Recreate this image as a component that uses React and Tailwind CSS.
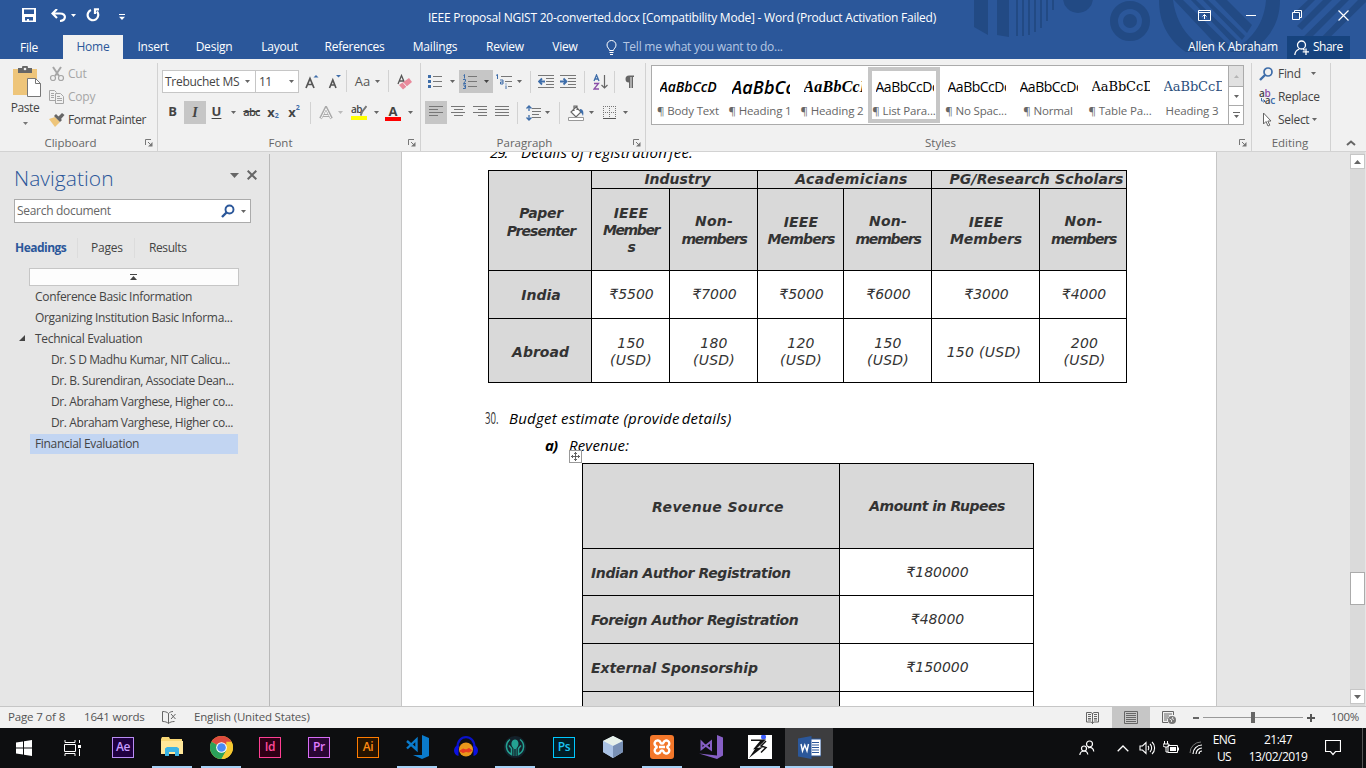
import React from "react";

/* ---------- small shared pieces ---------- */

function Svg({ w = 16, h = 16, vb, className = "", children }) {
  return (
    <svg width={w} height={h} viewBox={vb || `0 0 ${w} ${h}`} fill="none" className={`shrink-0 ${className}`}>
      {children}
    </svg>
  );
}

function Caret({ className = "text-[#666]" }) {
  return (
    <Svg w={5} h={3} className={className}>
      <path d="M0 0h5L2.500 3z" fill="currentColor" />
    </Svg>
  );
}

function Sep({ className = "" }) {
  return <div className={`w-px shrink-0 bg-[#d2d2d2] ${className}`} />;
}

function Cell({ className = "", children }) {
  return <div className={`flex h-full shrink-0 items-center justify-center ${className}`}>{children}</div>;
}

function Launcher() {
  return (
    <Svg w={8} h={8}>
      <path d="M.5 6V.5H6M3 3l3 3" stroke="#777" />
      <path d="M7.500 3v4.500H3z" fill="#777" />
    </Svg>
  );
}

function Lines({ rows, color = "#777" }) {
  return (
    <Svg w={15} h={13}>
      {rows.map(([x, w], i) => (
        <rect key={i} x={x} y={i * 3} width={w} height="1" fill={color} />
      ))}
    </Svg>
  );
}

function Group({ label, className = "", launcher = true, labelClass = "", children }) {
  return (
    <div className={`flex h-[88px] shrink-0 flex-col border-r border-[#d2d2d2] ${className}`}>
      <div className="h-[72px]">{children}</div>
      <div className="flex h-4 items-center">
        <span className={`flex-1 text-center text-[11.500px] text-[#666] ${labelClass}`}>{label}</span>
        <div className="w-[12px]">{launcher && <Launcher />}</div>
      </div>
    </div>
  );
}

/* ---------- title bar and tabs ---------- */

function HeaderArt() {
  return (
    <svg className="absolute right-0 top-0" width="406" height="59" viewBox="0 0 406 59" fill="#224a84">
      <circle cx="118" cy="-2" r="15" />
      <path d="M14 0h14v35l-14-8zM37 0h12v37l-12-2zM56 0h2v36h-2zM62 0h2v36h-2zM68 0h2v35h-2zM74 0h2v32h-2zM80 0h2v28h-2zM86 0h2v21h-2zM92 0h2v10h-2z" />
      <circle cx="170" cy="21" r="16" fill="none" stroke="#224a84" strokeWidth="8" />
      <circle cx="170" cy="21" r="7" />
      <path d="M199 0h14c2 16 9 30 20 40 6 5 12 9 20 12h-27C208 40 199 22 199 0zM320 0h-14c-1 14-6 26-14 35-7 8-14 13-23 17h20c20-12 31-29 31-52z" />
      <path d="M214 0h9l49 48-9 4zM231 0h5l43 42-4 4zM243 0h5l37 36-3 4zM255 0h12l25 25-5 8z" />
      <path d="M348 0h7l-17 17-4-4zM363 0h9l-30 30-5-4zM381 0h8l-47 47-4-5zM398 0h8v2l-51 50-4-4z" />
    </svg>
  );
}

const TABS = [
  ["Insert", "w-[60px]"],
  ["Design", "w-[62px]"],
  ["Layout", "w-[69px]"],
  ["References", "w-[81px]"],
  ["Mailings", "w-[80px]"],
  ["Review", "w-[60px]"],
  ["View", "w-[60px]"],
];

function Header() {
  return (
    <header className="relative h-[59px] bg-[#2b579a] text-white">
      <HeaderArt />
      <div className="relative flex h-[35px] pl-[22px]">
        <div className="flex h-[30px] w-[300px] items-center">
          <Svg w={14} h={14}>
            <path d="M0 0h14v14H0zM2 1.500v4.500h10V1.500zM3 9v3.500h2V11h2v1.500h4V9z" fill="#fff" fillRule="evenodd" />
          </Svg>
          <Svg w={15} h={13} className="ml-[15px]">
            <path d="M6 0L1.500 4.500 6 9M2 4.500h7c7 0 6 7 0 7.500" stroke="#fff" strokeWidth="2.200" />
          </Svg>
          <Caret className="ml-[5px] text-white" />
          <Svg w={14} h={14} className="ml-[10px]">
            <path d="M5 2a5.300 5.300 0 1 0 6 1.500M13 1.300H9V6" stroke="#fff" strokeWidth="2.200" />
          </Svg>
          <Svg w={6} h={6} className="ml-[19px] mt-1">
            <path d="M0 0h6v1H0zM0 2.800h6L3 6z" fill="#fff" />
          </Svg>
        </div>
        <div className="h-[35px] w-[720px] text-center text-[12px] leading-[35px] tracking-[-0.230px]">
          IEEE Proposal NGIST 20-converted.docx [Compatibility Mode] - Word (Product Activation Failed)
        </div>
        <div className="flex h-[30px] items-center pl-[156px]">
          <Svg w={13} h={11}>
            <path d="M.5.500h12v10H.5zM.5 2.500h12M6.500 9V4.500M4.500 6.500l2-2 2 2" stroke="#fff" />
          </Svg>
          <Svg w={10} h={2} className="ml-[35px]"><path d="M0 1.500h10" stroke="#fff" /></Svg>
          <Svg w={10} h={10} className="ml-[36px]">
            <path d="M.5 2.500h7v7h-7zM2.500 2.500v-2h7v7h-2" stroke="#fff" />
          </Svg>
          <Svg w={11} h={11} className="ml-[36px]"><path d="M.5.500l10 10M10.500.500l-10 10" stroke="#fff" strokeWidth="1.200" /></Svg>
        </div>
      </div>
      <nav className="relative flex h-6 items-center text-[12px] tracking-[-0.220px]">
        <span className="w-[63px] pr-[5px] pt-[2px] text-center">File</span>
        <span className="flex h-6 w-[60px] items-center justify-center bg-[#f1f1f1] text-[#2b579a]">Home</span>
        {TABS.map(([t, w]) => (
          <span key={t} className={`shrink-0 text-center ${w}`}>{t}</span>
        ))}
        <Svg w={11} h={15} className="ml-[11px]">
          <path d="M3.500 10.500c0-2-2.500-2.500-2.500-5.500a4.500 4.500 0 0 1 9 0c0 3-2.500 3.500-2.500 5.500zM3.500 12.500h4M4 14.500h3" stroke="#fff" />
        </Svg>
        <span className="ml-[6px] w-[180px] tracking-[-0.250px] text-[#b5c7e3]">Tell me what you want to do...</span>
        <span className="ml-[385px] w-[99px] tracking-[-0.200px]">Allen K Abraham</span>
        <div className="flex h-[23px] w-[63px] items-center bg-[#16437e] pl-[7px]">
          <Svg w={15} h={15}>
            <circle cx="7.500" cy="5" r="4" stroke="#fff" strokeWidth="1.300" />
            <path d="M.8 15c.2-3 2-5 4.500-6M9 8.500l1.500 2M12 8.500v6.500M8.700 11.800h6.300" stroke="#fff" strokeWidth="1.300" />
          </Svg>
          <span className="ml-1 tracking-[-0.500px]">Share</span>
        </div>
      </nav>
    </header>
  );
}

/* ---------- ribbon ---------- */

function Clipboard() {
  return (
    <Group label="Clipboard" className="w-[158px]" labelClass="pr-1">
      <div className="flex">
        <div className="flex w-[50px] flex-col items-center pt-[3px] text-[12px] tracking-[-0.400px]">
          <Svg w={30} h={32} className="ml-[4px]">
            <path d="M1 3h24v26H1z" fill="#eec57a" />
            <path d="M6 2h4a3 3 0 0 1 6 0h4v5H6z" fill="#666" />
            <circle cx="13" cy="3" r="1.300" fill="#f1f1f1" />
            <path d="M15.500 12.500h8l5 5v13h-13z" fill="#fff" stroke="#777" />
            <path d="M23.500 12.500v5h5" stroke="#777" />
          </Svg>
          <span className="leading-5">Paste</span>
          <Caret className="mt-[4px] text-[#777]" />
        </div>
        <div className="-ml-[2px] -mt-px flex flex-col text-[12px] tracking-[-0.220px]">
          <div className="flex h-[23px] items-center text-[#a6a6a6]">
            <Svg w={16} h={16} className="ml-[1px]">
              <path d="M4 1l6 9M12 1L6 10" stroke="#a6a6a6" strokeWidth="2" />
              <circle cx="4" cy="12" r="2.500" stroke="#a6a6a6" strokeWidth="1.200" />
              <circle cx="12" cy="12" r="2.500" stroke="#a6a6a6" strokeWidth="1.200" />
            </Svg>
            <span className="ml-[3px]">Cut</span>
          </div>
          <div className="flex h-[23px] items-center text-[#a6a6a6]">
            <Svg w={16} h={14} className="ml-[1px]">
              <path d="M6 10.500H.500V.500h5l2 2M2 3.500h3M2 5.500h3M2 7.500h3M6.500 3.500h5l3 3v7h-8zM8 6.500h3M8 8.500h5M8 10.500h5" stroke="#a6a6a6" />
            </Svg>
            <span className="ml-[3px]">Copy</span>
          </div>
          <div className="flex h-[23px] items-center text-[#444]">
            <Svg w={16} h={14} className="ml-[1px]">
              <path d="M0 6l6-2 5 5-5 5z" fill="#eec57a" />
              <path d="M5 3l2-2 6 6-2 2zM9 4l4-4 2.500 2-3.500 4z" fill="#666" />
            </Svg>
            <span className="ml-[3px] tracking-[-0.400px]">Format Painter</span>
          </div>
        </div>
      </div>
    </Group>
  );
}

function FontGroup() {
  return (
    <Group label="Font" className="w-[263px]" labelClass="pr-[5px]">
      <div className="mt-[7px] flex h-[23px] items-stretch pl-[4px] text-[12px]">
        <div className="flex w-[94px] items-center justify-between border border-[#c6c6c6] bg-white pl-[2px] pr-[5px] tracking-[-0.280px]">
          Trebuchet MS <Caret />
        </div>
        <div className="-ml-px flex w-[44px] items-center justify-between border border-[#c6c6c6] bg-white pl-[3px] pr-[4px] tracking-[-0.700px]">
          11 <Caret />
        </div>
        <Cell className="w-[25px]">
          <Svg w={14} h={15}>
            <path d="M1 14L5 4.500 9 14M2.500 10.500h5" stroke="#555" strokeWidth="1.700" />
            <path d="M8.500 3.500h5L11 1z" fill="#3e6da9" />
          </Svg>
        </Cell>
        <Cell className="w-[22px]">
          <Svg w={14} h={15}>
            <path d="M1.500 14L4.800 6 8 14M2.500 11h4.500" stroke="#555" strokeWidth="1.600" />
            <path d="M8 1h5l-2.500 2.500z" fill="#3e6da9" />
          </Svg>
        </Cell>
        <Sep className="h-[22px]" />
        <Cell className="w-[41px] gap-[5px] text-[13px] text-[#555]">Aa<Caret /></Cell>
        <Sep className="h-[22px]" />
        <Cell className="w-[30px]">
          <Svg w={15} h={16}>
            <path d="M1 10L4.500 1.500 8 10M2.500 7h4" stroke="#555" strokeWidth="1.300" />
            <path d="M8.500 6.500l3.500-2.500 3 4-9 7.500-4-4.500z" fill="#e8899b" />
            <path d="M6 8.500l4 4.500" stroke="#f1f1f1" />
          </Svg>
        </Cell>
      </div>
      <div className="mt-[8px] flex h-[23px] items-stretch pl-[3px] text-[13px] text-[#444]">
        <Cell className="w-[23px] pb-px font-bold">B</Cell>
        <Cell className="w-[22px] bg-[#c6c6c6] pb-px font-['Liberation_Serif',serif] text-[14px] font-bold italic">I</Cell>
        <Cell className="w-[21px] pb-px font-bold underline underline-offset-2">U</Cell>
        <Cell className="w-[12px]"><Caret /></Cell>
        <Cell className="w-[25px] text-[11px] font-semibold tracking-[-0.700px] line-through">abc</Cell>
        <Cell className="w-[18px] font-bold">x<span className="mt-2 text-[7px] text-[#3e6da9]">2</span></Cell>
        <Cell className="w-[24px] font-bold">x<span className="-mt-2 text-[7px] text-[#3e6da9]">2</span></Cell>
        <Cell className="w-[8px]"><Sep className="h-[22px]" /></Cell>
        <Cell className="w-[23px]">
          <Svg w={14} h={14}>
            <path d="M1.500 12.500L7 1.500l5.500 11M4 9.500h6" stroke="#aaa" strokeWidth="2.800" />
            <path d="M2 12.500L7 2.500l5 10M4.500 9.500h5" stroke="#f1f1f1" strokeWidth="1" />
          </Svg>
        </Cell>
        <Cell className="w-[7px]"><Caret className="text-[#bbb]" /></Cell>
        <Cell className="w-[30px] flex-col">
          <div className="flex h-[11px] items-start text-[10px] font-semibold leading-[8px] tracking-[-0.500px]">
            ab
            <Svg w={7} h={11} className="-ml-[2px]"><path d="M6.500 1L2 7l-1.500 3.500" stroke="#777" strokeWidth="2" /></Svg>
          </div>
          <div className="h-1 w-4 bg-[#ffff00]" />
        </Cell>
        <Cell className="w-[4px]"><Caret /></Cell>
        <Cell className="w-[30px] flex-col">
          <span className="h-[12px] text-[13px] font-bold leading-[12px]">A</span>
          <div className="h-1 w-4 bg-[#ff0000]" />
        </Cell>
        <Cell className="w-[4px]"><Caret /></Cell>
      </div>
    </Group>
  );
}

function ListIcon({ numbered }) {
  return (
    <Svg w={14} h={15}>
      <path d="M5 2.500h9M5 7.500h9M5 12.500h9" stroke="#777" />
      {numbered ? (
        <path d="M.5 1.500l1-1v4M0 5.500h2.500v1.500L.5 9.500H3M0 11h2.500v3.500H0M1 12.700h1.500" stroke="#3e6da9" />
      ) : (
        <path d="M0 1h3v3H0zM0 6h3v3H0zM0 11h3v3H0z" fill="#3e6da9" />
      )}
    </Svg>
  );
}

function IndentIcon({ out }) {
  return (
    <Svg w={16} h={13}>
      <path d="M0 .500h16M8 3.500h8M8 6.500h8M8 9.500h8M0 12.500h16" stroke="#777" />
      <path d={out ? "M7 6.500H1.500M4 3.500l-3 3 3 3" : "M0 6.500h5.500M3.500 3.500l3 3-3 3"} stroke="#3e6da9" strokeWidth="1.800" />
    </Svg>
  );
}

function ParagraphGroup() {
  return (
    <Group label="Paragraph" className="w-[225px]" labelClass="pr-[5px]">
      <div className="mt-[7px] flex h-[23px] items-stretch">
        <Cell className="w-[28px]"><ListIcon /></Cell>
        <Cell className="w-[10px] pr-1"><Caret /></Cell>
        <Cell className="w-[34px] gap-[7px] bg-[#c6c6c6]"><ListIcon numbered /><Caret className="text-[#444]" /></Cell>
        <Cell className="w-[22px] pl-px">
          <Svg w={17} h={16}>
            <path d="M5 2.500h11M9 7.500h7M12 12.500h4" stroke="#777" />
            <path d="M0 1.500l1.500-1V5M4 6h3v4H4.500V8H7M10 9.500v1M10 11.500V15" stroke="#3e6da9" />
          </Svg>
        </Cell>
        <Cell className="w-[9px] pr-px"><Caret /></Cell>
        <Cell className="w-[13px]"><Sep className="h-[22px]" /></Cell>
        <Cell className="w-[18px]"><IndentIcon out /></Cell>
        <Cell className="w-[26px]"><IndentIcon /></Cell>
        <Cell className="w-[6px]"><Sep className="h-[22px]" /></Cell>
        <Cell className="w-[26px]">
          <Svg w={15} h={16}>
            <path d="M1 7L3.500 1 6 7M2 5h3" stroke="#3e6da9" strokeWidth="1.300" />
            <path d="M1 9.500h4.500L1 15h5" stroke="#8a4fa8" strokeWidth="1.300" />
            <path d="M11.500 1v13M8.500 11l3 3 3-3" stroke="#666" strokeWidth="1.200" />
          </Svg>
        </Cell>
        <Cell className="w-[3px]"><Sep className="h-[22px]" /></Cell>
        <Cell className="w-[27px]">
          <Svg w={11} h={13}>
            <path d="M5 7.500a3.500 3.500 0 0 1 0-7h5v1.500H9V13H7.500V2H6.500v11H5z" fill="#666" />
          </Svg>
        </Cell>
      </div>
      <div className="mt-[8px] flex h-[23px] items-stretch pl-[4px]">
        <Cell className="w-[22px] bg-[#c6c6c6]"><Lines rows={[[0, 14], [0, 9], [0, 14], [0, 9]]} /></Cell>
        <Cell className="w-[22px]"><Lines rows={[[0, 14], [3, 9], [0, 14], [3, 9]]} /></Cell>
        <Cell className="w-[22px]"><Lines rows={[[0, 14], [5, 9], [0, 14], [5, 9]]} /></Cell>
        <Cell className="w-[22px]"><Lines rows={[[0, 14], [0, 14], [0, 14], [0, 14]]} /></Cell>
        <Cell className="w-[8px]"><Sep className="h-[22px]" /></Cell>
        <Cell className="w-[24px]">
          <Svg w={15} h={16}>
            <path d="M6 3.500h9M6 6.500h9M6 9.500h7M6 12.500h9" stroke="#777" />
            <path d="M3 1v5M.5 3.500L3 1l2.500 2.500M3 10v5M.5 12.500L3 15l2.500-2.500" stroke="#3e6da9" strokeWidth="1.300" />
          </Svg>
        </Cell>
        <Cell className="w-[5px]"><Caret /></Cell>
        <Cell className="w-[18px]"><Sep className="h-[22px]" /></Cell>
        <Cell className="w-[16px]">
          <Svg w={17} h={16}>
            <path d="M8 2l5 5-5 5-5-5zM6 6V1h3v4" stroke="#666" strokeWidth="1.200" fill="#fff" />
            <path d="M12 4c3 0 4 3 3 7-1-2-1-3-3-4z" fill="#3e6da9" />
            <path d="M.5 12.500h15v3H.5z" fill="#fff" stroke="#999" />
          </Svg>
        </Cell>
        <Cell className="w-[14px]"><Caret /></Cell>
        <Cell className="w-[22px]">
          <Svg w={13} h={13}>
            <path d="M.5 0v12M6.500 0v12M12.500 0v12M0 .500h13M0 6.500h13" stroke="#777" strokeDasharray="1 1" />
            <path d="M0 12.500h13" stroke="#555" />
          </Svg>
        </Cell>
        <Cell className="w-[10px]"><Caret /></Cell>
      </div>
    </Group>
  );
}

const STYLES = [
  ["AaBbCcD", "¶ Body Text", "text-[14px] font-semibold italic text-black tracking-[-0.050px]"],
  ["AaBbCc", "¶ Heading 1", "text-[18px] font-semibold italic text-black tracking-[0.100px]"],
  ["AaBbCcL", "¶ Heading 2", "font-['Liberation_Serif',serif] text-[16px] font-bold italic text-black tracking-[0.200px]"],
  ["AaBbCcDc", "¶ List Para...", "text-[14px] text-black tracking-[-0.500px]"],
  ["AaBbCcDc", "¶ No Spac...", "text-[14px] text-black tracking-[-0.500px]"],
  ["AaBbCcDc", "¶ Normal", "text-[14px] text-black tracking-[-0.500px]"],
  ["AaBbCcD", "¶ Table Pa...", "font-['DejaVu_Serif',serif] text-[13px] text-black tracking-[-0.100px]"],
  ["AaBbCcD", "Heading 3", "font-['DejaVu_Serif',serif] text-[13px] text-[#2b4f7d] tracking-[-0.100px]"],
];

function StylesGroup() {
  return (
    <Group label="Styles" className="w-[606px]" labelClass="pr-[4px]">
      <div className="ml-[5px] mt-[2px] flex h-[60px] w-[593px] border border-[#ababab] bg-white">
        {STYLES.map(([sample, name, cls], i) => (
          <div
            key={i}
            className={`my-px flex h-[56px] w-[72px] shrink-0 flex-col items-center ${
              i === 3 ? "border-4 border-[#c6c6c6]" : "border-4 border-transparent"
            }`}
          >
            <div className={`ml-px mt-[5px] h-[22px] w-[58px] overflow-hidden whitespace-nowrap leading-[22px] ${cls}`}>{sample}</div>
            <div className="mt-[5px] whitespace-nowrap text-[11.500px] leading-4 tracking-[-0.150px] text-[#666]">{name}</div>
          </div>
        ))}
        <div className="flex w-[15px] flex-col border-l border-[#ababab]">
          <div className="flex h-5 items-center justify-center bg-[#e1e1e1]">
            <Caret className="rotate-180 text-[#b5b5b5]" />
          </div>
          <div className="flex h-5 items-center justify-center border-y border-[#ababab]"><Caret /></div>
          <div className="flex flex-1 items-center justify-center">
            <Svg w={7} h={6}><path d="M0 0h7v1H0zM1 3h5L3.500 6z" fill="#666" /></Svg>
          </div>
        </div>
      </div>
    </Group>
  );
}

function EditingGroup() {
  return (
    <Group label="Editing" className="w-[79px]" launcher={false} labelClass="pl-[10px]">
      <div className="-mt-px flex flex-col pl-[7px] text-[12px] tracking-[-0.300px] text-[#444]">
        <div className="flex h-[23px] items-center">
          <Svg w={16} h={14}>
            <circle cx="9" cy="5" r="4" stroke="#3e6da9" strokeWidth="1.700" />
            <path d="M6 8l-5 5" stroke="#3e6da9" strokeWidth="2.400" />
          </Svg>
          <span className="ml-[3px]">Find</span>
          <Caret className="ml-[10px] text-[#666]" />
        </div>
        <div className="flex h-[23px] items-center">
          <div className="flex w-4 flex-col text-[10px] font-semibold leading-[7px] tracking-[-0.300px]">
            <span>a<span className="text-[#8a4fa8]">b</span></span>
            <span className="flex items-center justify-end">
              <Svg w={4} h={5}><path d="M.5 0v3H4M2.500 1.500L4 3 2.500 4.500" stroke="#3e6da9" /></Svg>
              a<span className="text-[#3e6da9]">c</span>
            </span>
          </div>
          <span className="ml-[3px]">Replace</span>
        </div>
        <div className="flex h-[23px] items-center">
          <Svg w={16} h={15}>
            <path d="M4.500 1v11l2.500-2.500 2 4.500 1.800-.8-2-4.200h3.200z" fill="#fff" stroke="#666" />
          </Svg>
          <span className="ml-[3px]">Select</span>
          <Caret className="ml-[3px] text-[#666]" />
        </div>
      </div>
    </Group>
  );
}

function Ribbon() {
  return (
    <section className="flex h-[93px] border-b border-[#d2d2d2] bg-[#f1f1f1] pt-[4px] text-[#444]">
      <Clipboard />
      <FontGroup />
      <ParagraphGroup />
      <StylesGroup />
      <EditingGroup />
      <div className="flex flex-1 items-end justify-center pb-[5px] pl-[4px]">
        <Svg w={10} h={6}><path d="M1 5l4-3.500L9 5" stroke="#666" strokeWidth="2" /></Svg>
      </div>
    </section>
  );
}

/* ---------- navigation pane ---------- */

const HEADINGS = [
  ["Conference Basic Information", 1],
  ["Organizing Institution Basic Informa...", 1],
  ["Technical Evaluation", 1, true],
  ["Dr. S D Madhu Kumar, NIT Calicu...", 2],
  ["Dr. B. Surendiran, Associate Dean...", 2],
  ["Dr. Abraham Varghese, Higher co...", 2],
  ["Dr. Abraham Varghese, Higher co...", 2],
  ["Financial Evaluation", 1, false, true],
];

function Navigation() {
  return (
    <aside className="mt-[2px] w-[270px] shrink-0 border-r border-[#b9b9b9] text-[12px] tracking-[-0.200px] text-[#444]">
      <div className="flex h-[45px] pl-[14px] pt-[8px]">
        <h2 className="w-[216px] text-[21px] font-light leading-8 tracking-[0.050px] text-[#2b579a]">Navigation</h2>
        <Svg w={9} h={5} className="mt-[11px]"><path d="M0 0h9L4.500 5z" fill="#666" /></Svg>
        <Svg w={10} h={10} className="ml-[8px] mt-[8px]"><path d="M.7.700l8.600 8.600M9.300.700L.7 9.300" stroke="#666" strokeWidth="2" /></Svg>
      </div>
      <div className="ml-[14px] flex h-6 w-[237px] items-center border border-[#ababab] bg-white pl-[2px] text-[#666]">
        <span className="w-[204px] tracking-[-0.300px]">Search document</span>
        <Svg w={14} h={14}>
          <circle cx="8.500" cy="5.500" r="4" stroke="#2b579a" strokeWidth="1.900" />
          <path d="M5.500 8.500L1 13" stroke="#2b579a" strokeWidth="2.400" />
        </Svg>
        <Caret className="ml-[6px] text-[#666]" />
      </div>
      <div className="mt-[15px] flex h-5 items-center">
        <span className="w-[77px] pl-[15px] font-bold tracking-[-0.530px] text-[#2b579a]">Headings</span>
        <Sep className="h-5 bg-[#dcdcdc]" />
        <span className="w-[56px] pl-[13px]">Pages</span>
        <Sep className="h-5 bg-[#dcdcdc]" />
        <span className="pl-[14px] tracking-[-0.400px]">Results</span>
      </div>
      <div className="ml-[29px] mt-[10px] flex h-[18px] w-[210px] items-center justify-center border border-[#c6c6c6] bg-[#fdfdfd]">
        <Svg w={7} h={6} className="-ml-[2px]"><path d="M0 0h7v1H0zM3.500 2L7 6H0z" fill="#444" /></Svg>
      </div>
      <ul>
        {HEADINGS.map(([text, level, open, active], i) => (
          <li key={i} className="flex h-[21px] items-center">
            <span className="w-[30px] pl-[19px]">
              {open && <Svg w={6} h={6} className="-mt-[2px]"><path d="M6 0v6H0z" fill="#444" /></Svg>}
            </span>
            <span
              className={`h-5 w-[208px] whitespace-nowrap leading-5 ${
                level === 2 ? "pl-[21px] tracking-[-0.400px]" : "pl-[5px] tracking-[-0.320px]"
              } ${active ? "bg-[#c2d5f2]" : ""}`}
            >
              {text}
            </span>
          </li>
        ))}
      </ul>
    </aside>
  );
}

/* ---------- document ---------- */

const HEAD = "flex items-center justify-center bg-[#d9d9d9] text-center font-bold";
const BODY = "flex items-center justify-center bg-white text-center text-[14px]";

function FeeTable() {
  return (
    <div className="ml-[86px] mt-[9px] grid h-[213px] w-[639px] shrink-0 grid-cols-[102px_77px_87px_85px_87px_107px_86px] grid-rows-[17px_81px_47px_63px] gap-px bg-black p-px font-['DejaVu_Sans',sans-serif] text-[14px] italic leading-[17px] text-[#333]">
      <div className={`${HEAD} row-span-2 pl-[2px] pt-[2px] leading-[18px] tracking-[-0.950px]`}>
        <span><span className="tracking-[-0.300px]">Paper</span><br />Presenter</span>
      </div>
      <div className={`${HEAD} col-span-2 pl-[6px]`}>Industry</div>
      <div className={`${HEAD} col-span-2 pl-[14px] tracking-[0.400px]`}>Academicians</div>
      <div className={`${HEAD} col-span-2 whitespace-nowrap pl-[15px] tracking-[0.150px]`}>PG/Research Scholars</div>
      <div className={`${HEAD} pb-px pl-px pt-[2px] tracking-[-1.400px]`}>
        <span><span className="tracking-[0.200px]">IEEE</span><br />Member<br />s</span>
      </div>
      <NonMembers />
      <div className={`${HEAD} pl-px pt-[2px] tracking-[-0.800px]`}>
        <span><span className="tracking-[0.200px]">IEEE</span><br />Members</span>
      </div>
      <NonMembers />
      <div className={`${HEAD} pl-px pt-[2px] tracking-[-0.100px]`}>
        <span><span className="tracking-[0.200px]">IEEE</span><br />Members</span>
      </div>
      <NonMembers />
      <div className={`${HEAD} pl-[2px] pt-px`}>India</div>
      {["5500", "7000", "5000", "6000", "3000", "4000"].map((v) => (
        <div key={v} className={`${BODY} pl-[2px]`}>₹{v}</div>
      ))}
      <div className={`${HEAD} pl-px pt-[3px]`}>Abroad</div>
      {["150", "180", "120", "150"].map((v, i) => (
        <div key={i} className={`${BODY} pl-px pt-[3px] tracking-[0.200px]`}><span>{v}<br />(USD)</span></div>
      ))}
      <div className={`${BODY} pr-[3px] pt-[3px] tracking-[0.300px]`}>150 (USD)</div>
      <div className={`${BODY} pl-[3px] pt-[3px] tracking-[0.200px]`}><span>200<br />(USD)</span></div>
    </div>
  );
}

function NonMembers() {
  return (
    <div className={`${HEAD} pl-px leading-[18px] tracking-[-1.200px]`}>
      <span><span className="tracking-[0.200px]">Non-</span><br />members</span>
    </div>
  );
}

function RevenueTable() {
  return (
    <div className="relative ml-[180px] mt-[9px] grid w-[452px] shrink-0 grid-cols-[256px_193px] grid-rows-[84px_46px_47px_47px_30px] gap-px bg-black p-px font-['DejaVu_Sans',sans-serif] text-[14px] italic text-[#333]">
      <div className="absolute -left-[13px] -top-[13px] flex h-[13px] w-[13px] items-center justify-center border border-[#999] bg-white">
        <Svg w={9} h={9}>
          <path d="M4.500 0v9M0 4.500h9M3 2l1.500-1.500L6 2M3 7l1.500 1.500L6 7M2 3L.5 4.500 2 6M7 3l1.500 1.500L7 6" stroke="#555" strokeWidth="0.900" />
        </Svg>
      </div>
      <div className={`${HEAD} pl-[14px] pt-[2px] tracking-[0.350px]`}>Revenue Source</div>
      <div className={`${HEAD} pl-px tracking-[-0.500px]`}>Amount in Rupees</div>
      {[
        ["Indian Author Registration", "₹180000", "tracking-[-0.400px] pt-[2px]"],
        ["Foreign Author Registration", "₹48000", "tracking-[-0.470px] pt-px"],
        ["External Sponsorship", "₹150000", "tracking-[-0.080px]"],
      ].map(([name, amount, track]) => (
        <React.Fragment key={name}>
          <div className={`flex items-center bg-[#d9d9d9] pl-[8px] font-bold ${track}`}>{name}</div>
          <div className={`${BODY} pb-px pl-[2px]`}>{amount}</div>
        </React.Fragment>
      ))}
      <div className="bg-[#d9d9d9]" />
      <div className="bg-white" />
    </div>
  );
}

function Document() {
  return (
    <div className="ml-[131px] w-[816px] shrink-0 overflow-hidden border-x border-[#c6c6c6] bg-white text-[15px] leading-[18px] text-black">
      <div className="-mt-[9px] flex h-[18px] pl-[88px]">
        <span className="w-[31px] italic tracking-[-1px]">29.</span>
        <span className="whitespace-nowrap italic tracking-[0.150px]">Details of registration<span className="-ml-[2px]"> fee:</span></span>
      </div>
      <FeeTable />
      <div className="mt-[26px] flex h-[18px] pl-[83px]">
        <span className="w-[24px]"><span className="inline-block origin-left scale-x-[0.600] text-[16px] text-[#333]">30.</span></span>
        <span className="whitespace-nowrap italic tracking-[0.230px]">Budget estimate (provide<span className="-ml-[2px]">&nbsp;details)</span></span>
      </div>
      <div className="mt-[9px] flex h-[18px] pl-[143px] italic">
        <span className="w-[24px] font-bold tracking-[-1px]">a)</span>
        <span className="tracking-[0.150px]">Revenue:</span>
      </div>
      <RevenueTable />
    </div>
  );
}

function Scrollbar() {
  return (
    <div className="ml-auto mr-[1px] flex w-[15px] shrink-0 flex-col bg-[#dadada] pb-[2px] pt-[2px]">
      <div className="flex h-[15px] items-center justify-center border border-[#c6c6c6] bg-white">
        <Svg w={7} h={4}><path d="M0 4h7L3.500 0z" fill="#666" /></Svg>
      </div>
      <div className="mt-[403px] h-[33px] border border-[#ababab] bg-white" />
      <div className="mt-auto flex h-[15px] items-center justify-center border border-[#c6c6c6] bg-white">
        <Svg w={7} h={4}><path d="M0 0h7L3.500 4z" fill="#666" /></Svg>
      </div>
    </div>
  );
}

/* ---------- status bar ---------- */

function StatusBar() {
  return (
    <footer className="flex h-[22px] shrink-0 items-center border-t border-[#c6c6c6] bg-[#f1f1f1] text-[11.500px] tracking-[-0.170px] text-[#555]">
      <span className="w-[76px] pb-px pl-[8px]">Page 7 of 8</span>
      <span className="w-[86px] pb-px pl-[8px]">1641 words</span>
      <Svg w={15} h={13}>
        <path d="M6.500 2.500C5 1 3 .500.500.500v10c2.500 0 4.500.500 6 2zC8 1 9.500.500 11 .500M6.500 12.500C8 11 10 10.500 12.500 10.500M9 3l4.500 5M13.500 3L9 8" stroke="#666" />
      </Svg>
      <span className="ml-[17px] w-[892px] pb-px">English (United States)</span>
      <Svg w={13} h={13}>
        <path d="M6.500 2v11M.5 1.500h4.500l1.500 1 1.500-1h4.500v9.500H8L6.500 12 5 11H.500zM2 3.500h3M2 5.500h3M2 7.500h3M2 9h3M8 3.500h3M8 5.500h3M8 7.500h3M8 9h3" stroke="#666" />
      </Svg>
      <div className="ml-[13px] flex h-full w-[38px] items-center justify-center bg-[#c6c6c6]">
        <Svg w={14} h={13}><path d="M.5.500h13v12H.500zM2 2.500h10M2 4.500h10M2 6.500h10M2 8.500h10M2 10.500h10" stroke="#666" /></Svg>
      </div>
      <Svg w={14} h={13} className="ml-[12px]">
        <path d="M6 11.500H.500V.500h11V4M2 3h8M2 5h5M2 7h4M2 9h3" stroke="#666" />
        <circle cx="10" cy="9" r="4" fill="#777" />
        <path d="M7.500 8l2 1v2M11 6l-1 1.500 2 1" stroke="#f1f1f1" strokeWidth="0.900" />
      </Svg>
      <div className="ml-[17px] h-[2px] w-[6px] bg-[#666]" />
      <div className="ml-[4px] flex h-full w-[100px] items-center justify-center">
        <div className="h-px flex-1 bg-[#999]" />
        <div className="h-[11px] w-[4px] bg-[#666]" />
        <div className="h-px flex-1 bg-[#999]" />
      </div>
      <Svg w={8} h={8} className="ml-[4px]"><path d="M4 0v8M0 4h8" stroke="#555" strokeWidth="2" /></Svg>
      <span className="ml-[16px] pb-px tracking-[-0.350px]">100%</span>
    </footer>
  );
}

/* ---------- taskbar ---------- */

function AdobeIcon({ text, className }) {
  return (
    <div className={`flex h-[21px] w-[22px] items-center justify-center border text-[12px] font-semibold leading-none tracking-[-0.300px] ${className}`}>
      {text}
    </div>
  );
}

const APPS = [
  { icon: <AdobeIcon text="Ae" className="border-[#b98cf5] bg-[#1f0040] text-[#c79bff]" /> },
  {
    line: true,
    icon: (
      <Svg w={22} h={20}>
        <path d="M0 2l1-2h7l1 2h12v15H0z" fill="#f8d775" />
        <path d="M0 4h22v13H0z" fill="#ffe79a" />
        <path d="M4 11.500l2-1.500h10l2 1.500V19h-4v-4H8v4H4z" fill="#3bb4e5" />
      </Svg>
    ),
  },
  {
    line: true,
    icon: (
      <Svg w={23} h={23} vb="0 0 24 24">
        <circle cx="12" cy="12" r="12" fill="#f6c831" />
        <path d="M12 12L1.600 6A12 12 0 0 1 22.400 6z" fill="#de4b3e" />
        <path d="M1.600 6A12 12 0 0 0 12 24l5-9-5-3z" fill="#2ba15a" />
        <path d="M22.400 6A12 12 0 0 1 12 24l5-9V6z" fill="#f6c831" />
        <circle cx="12" cy="12" r="5.600" fill="#fff" />
        <circle cx="12" cy="12" r="4.500" fill="#4a8af4" />
      </Svg>
    ),
  },
  { icon: <AdobeIcon text="Id" className="border-[#ff3f93] bg-[#2d0015] text-[#ff4b9a]" /> },
  { icon: <AdobeIcon text="Pr" className="border-[#d76cf5] bg-[#2a0634] text-[#e27bff]" /> },
  { icon: <AdobeIcon text="Ai" className="border-[#ff7c00] bg-[#261300] text-[#ff8a12]" /> },
  {
    line: true,
    icon: (
      <Svg w={24} h={24}>
        <path d="M17 0l7 3v18l-7 3-9-4h9z" fill="#0a7bcc" />
        <path d="M2 6l9.500 8.500v-10L2 13.500" stroke="#0a7bcc" strokeWidth="2.400" />
      </Svg>
    ),
  },
  {
    icon: (
      <Svg w={24} h={22}>
        <circle cx="12" cy="13.500" r="7" fill="#e8981b" />
        <path d="M6 15l3-2 3 1 3-1.500 3 2-3 1.500-3-.5-3 1z" fill="#e83a22" stroke="#e83a22" />
        <path d="M3.500 12C3 -2.500 21 -2.500 20.500 12" stroke="#0a12c9" strokeWidth="2.200" />
        <path d="M4.500 9v11c-6-1-6-10 0-11zM19.500 9v11c6-1 6-10 0-11z" fill="#0c10e0" />
      </Svg>
    ),
  },
  {
    line: true,
    icon: (
      <Svg w={22} h={22}>
        <circle cx="11" cy="11" r="11" fill="#13202a" />
        <path d="M11 3.500c3.500 0 4.500 5 2.500 7.500l-1 1.500v7.500h-.8v-7h-1.400v7h-.8v-7.500L8.500 11C6.500 8.500 7.500 3.500 11 3.500z" fill="#24a292" />
        <path d="M6 3.500C1 7 1 15 7.500 18.500v-6L5 9.500M16 3.500c5 3.500 5 11.500-1.500 15v-6L17 9.500" stroke="#24a292" strokeWidth="1.500" />
      </Svg>
    ),
  },
  { icon: <AdobeIcon text="Ps" className="border-[#00c8ff] bg-[#001d26] text-[#1bc5f5]" /> },
  {
    icon: (
      <Svg w={22} h={24}>
        <path d="M11 1l10 5v11l-10 6-10-6V6z" fill="#c0d3ea" />
        <path d="M11 1l10 5-10 5L1 6z" fill="#e6f0ea" />
        <path d="M1 6l10 5v12L1 17z" fill="#a9c1e4" />
        <path d="M21 6l-10 5v12l10-6z" fill="#7890b5" />
      </Svg>
    ),
  },
  {
    line: true,
    icon: (
      <Svg w={24} h={24}>
        <rect width="24" height="24" rx="3" fill="#f3772a" />
        <path d="M8 5.500a3 3 0 0 0-2 5.500c1 .500 1 1.500 0 2a3 3 0 1 0 4.500 3.500c.5-1.500 2.500-1.500 3 0A3 3 0 1 0 18 13c-1-.5-1-1.500 0-2a3 3 0 1 0-4.500-3.500c-.5 1.500-2.500 1.500-3 0A3 3 0 0 0 8 5.500zM9 12h6" stroke="#fff" strokeWidth="2.400" />
      </Svg>
    ),
  },
  {
    icon: (
      <Svg w={24} h={24}>
        <path d="M18 0l6 2.500v18L18 24 0 18.500l18 2z" fill="#865fc5" />
        <path d="M2.500 7v7l2-1.500L12 6.500v8L4.500 9z" stroke="#865fc5" strokeWidth="2" />
      </Svg>
    ),
  },
  {
    line: true,
    icon: (
      <Svg w={24} h={24}>
        <path d="M0 0h24v24H0z" fill="#fff" />
        <circle cx="15.500" cy="2" r="2.500" fill="#3d5eff" />
        <path d="M3 4.500h15L9 13l6-1L1 23l6-9-2 .5 7-8.500H3z" fill="#111" />
        <path d="M18 6l-5 5 5 1.500-5 5" stroke="#111" strokeWidth="1.500" />
      </Svg>
    ),
  },
  {
    active: true,
    icon: (
      <Svg w={23} h={23}>
        <path d="M12 3h11v17H12z" fill="#fff" stroke="#2b579a" />
        <path d="M14 6.500h7M14 9h7M14 11.500h7M14 14h7M14 16.500h7" stroke="#2b579a" />
        <path d="M0 2.500L13.500 0v23L0 20.500z" fill="#2b579a" />
        <path d="M3 8l1.500 7L6.800 9 9 15l1.500-7" stroke="#fff" strokeWidth="1.400" />
      </Svg>
    ),
  },
];

function Taskbar() {
  return (
    <div className="flex h-10 shrink-0 bg-[#0d0e10] text-white">
      <div className="flex w-[48px] items-center justify-center">
        <Svg w={16} h={16}><path d="M0 2.500l7-1v6H0zM8 1.300L16 0v7.500H8zM0 8.500h7v6l-7-1zM8 8.500h8V16l-8-1.300z" fill="#fff" /></Svg>
      </div>
      <div className="flex w-[48px] items-center justify-center">
        <Svg w={17} h={16}>
          <path d="M1 0v2.500h10V0M1 16v-2.500h10V16M.5 4.500h11v7H.500zM15.500 0v3M15.500 9v7" stroke="#fff" />
          <path d="M14 5h3v3h-3z" fill="#fff" />
        </Svg>
      </div>
      <div className="ml-[3px] flex gap-px">
        {APPS.map(({ icon, line, active }, i) => (
          <div key={i} className={`flex h-10 w-12 flex-col items-center ${active ? "bg-[#3d3d3f]" : ""}`}>
            <div className="flex h-[38px] items-center">{icon}</div>
            {line && <div className="h-[2px] w-10 bg-[#a5d0f5]" />}
            {active && <div className="h-[2px] w-12 bg-[#a5d0f5]" />}
          </div>
        ))}
      </div>
      <div className="ml-[246px] flex items-center">
        <Svg w={16} h={16}>
          <circle cx="10.500" cy="4" r="3" stroke="#fff" strokeWidth="1.200" />
          <circle cx="5" cy="8.500" r="2.500" stroke="#fff" strokeWidth="1.200" />
          <path d="M.8 15c.4-3 2-4 4.200-4s3.500 1.500 3.800 3.500M9 8c3-1.500 5.500.5 5.800 3.500" stroke="#fff" strokeWidth="1.200" />
        </Svg>
        <Svg w={12} h={7} className="ml-[22px]"><path d="M.7 6.300L6 1l5.300 5.300" stroke="#fff" strokeWidth="1.300" /></Svg>
        <Svg w={17} h={14} className="ml-[10px]">
          <path d="M1 5h2.500l3.500-3.500v11L3.500 9H1zM9 5c1 1 1 3 0 4M11 3c2.200 2 2.200 6 0 8M13 1c3.500 3 3.500 9 0 12" stroke="#fff" strokeWidth="1.100" />
        </Svg>
        <Svg w={17} h={14} className="ml-[7px]">
          <path d="M5 4.500h9.500v7H5zM15.500 6.500v3M1.500 0v3M4.500 0v3M0 3h6v2L4 6H2L0 5zM3 6v5h2" stroke="#fff" />
          <path d="M7 6h6v4H7z" fill="#fff" />
        </Svg>
        <Svg w={14} h={14} className="ml-[9px]">
          <path d="M1 12A11 11 0 0 1 12 1" stroke="#777" />
          <path d="M4 13A9 9 0 0 1 13 4M7 13a6 6 0 0 1 6-6M10 13a3 3 0 0 1 3-3" stroke="#fff" strokeWidth="1.200" />
        </Svg>
        <div className="ml-[4px] w-[34px] text-center text-[12px] leading-[17px] tracking-[-0.600px]">ENG<br />US</div>
        <div className="ml-[4px] w-[66px] text-center text-[12px] leading-[17px] tracking-[-0.500px]">21:47<br />13/02/2019</div>
        <Svg w={16} h={16} className="ml-[14px]">
          <path d="M.5.500h15v11h-5l-2.500 3-2.500-3h-5z" stroke="#fff" strokeWidth="1.200" />
        </Svg>
      </div>
      <div className="ml-auto mr-[3px] w-px bg-[#555]" />
    </div>
  );
}

export default function App() {
  return (
    <div className="flex h-[768px] w-[1366px] flex-col overflow-hidden bg-[#e6e6e6] font-['Open_Sans','Noto_Sans',sans-serif]">
      <Header />
      <Ribbon />
      <main className="flex h-[554px] overflow-hidden">
        <Navigation />
        <Document />
        <Scrollbar />
      </main>
      <StatusBar />
      <Taskbar />
    </div>
  );
}
